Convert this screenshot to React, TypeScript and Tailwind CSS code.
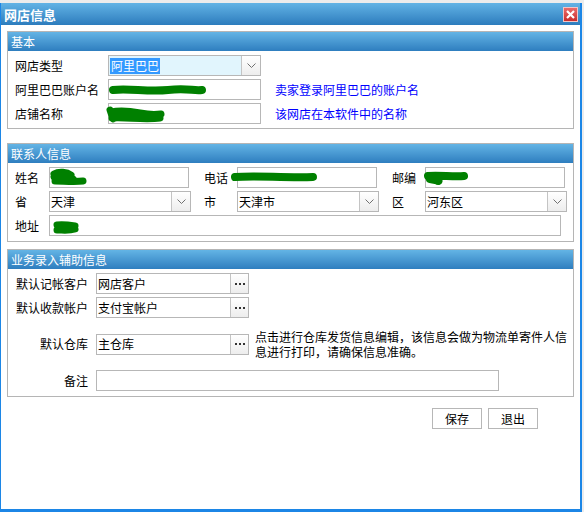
import type { ReactNode } from 'react';

const font = { fontFamily: '"Noto Sans CJK SC", "Noto Sans", sans-serif' };

function Section({ title, children, className = '' }: { title: string; children: ReactNode; className?: string }) {
  return (
    <div className={`ml-[6px] w-[567px] border border-[#b5b5b5] ${className}`}>
      <div className="flex h-[19px] items-center bg-gradient-to-b from-[#63b4e5] to-[#2e7ebf] pl-[3px] text-[12px] leading-none text-white">
        {title}
      </div>
      {children}
    </div>
  );
}

function Chevron() {
  return (
    <svg width="9" height="5" viewBox="0 0 9 5">
      <path d="M0.5 0.5 L4.5 4.5 L8.5 0.5" fill="none" stroke="#707070" strokeWidth="1" />
    </svg>
  );
}

function Field({
  width,
  children,
  select,
  dots,
  tint,
  scribble,
}: {
  width: number;
  children?: ReactNode;
  select?: boolean;
  dots?: boolean;
  tint?: boolean;
  scribble?: ReactNode;
}) {
  return (
    <div
      className={`relative flex h-[21px] shrink-0 border border-[#b7b7b7] ${tint ? 'bg-[#e1f5fd]' : 'bg-white'}`}
      style={{ width }}
    >
      <div className="flex min-w-0 flex-1 items-center pl-[1px] text-[12px] leading-none text-black">{children}</div>
      {select && (
        <div className="flex w-[19px] items-center justify-center border-l border-[#c4c4c4] bg-gradient-to-b from-white to-[#ededed]">
          <Chevron />
        </div>
      )}
      {dots && (
        <div className="flex w-[18px] items-center justify-center gap-[2px] border-l border-[#c4c4c4] bg-gradient-to-b from-white to-[#ededed]">
          <span className="h-[2px] w-[2px] bg-[#333]" />
          <span className="h-[2px] w-[2px] bg-[#333]" />
          <span className="h-[2px] w-[2px] bg-[#333]" />
        </div>
      )}
      {scribble}
    </div>
  );
}

// green marker strokes that hide personal data in the original screenshot
function Scribble({ left, top, w, h, d, sw = 7 }: { left: number; top: number; w: number; h: number; d: string; sw?: number }) {
  return (
    <svg className="pointer-events-none absolute" style={{ left, top }} width={w} height={h} viewBox={`0 0 ${w} ${h}`}>
      <path d={d} fill="none" stroke="#008000" strokeWidth={sw} strokeLinecap="round" strokeLinejoin="round" />
    </svg>
  );
}

export default function App() {
  return (
    <div className="h-[512px] w-[584px] overflow-hidden bg-[#ececec] pt-[3px]" style={font}>
      <div className="flex h-[509px] w-[582px] flex-col border-b-[3px] border-l border-r-2 border-[#1c86e6] bg-white">
        {/* title bar */}
        <div className="flex h-[22px] shrink-0 items-center justify-between bg-gradient-to-b from-[#62b3e5] to-[#2c7cbd] pl-[3px] pr-[2px]">
          <span className="text-[13px] font-bold leading-none text-white">网店信息</span>
          <div className="flex h-[15px] w-[15px] items-center justify-center border border-[#f4c4c4] bg-gradient-to-b from-[#ea6a6a] to-[#c92b2b]">
            <svg width="9" height="9" viewBox="0 0 9 9">
              <path d="M1 1 L8 8 M8 1 L1 8" stroke="white" strokeWidth="2.2" />
            </svg>
          </div>
        </div>

        <div className="pt-[6px]">
          {/* 基本 */}
          <Section title="基本">
            <div className="flex flex-col gap-[3px] pb-[4px] pl-[7px] pt-[4px] text-[12px]">
              <div className="flex items-center">
                <span className="w-[93px]">网店类型</span>
                <Field width={153} select tint>
                  <span className="bg-[#3399ff] px-[1px] py-[2px] text-white">阿里巴巴</span>
                </Field>
              </div>
              <div className="flex items-center">
                <span className="w-[93px]">阿里巴巴账户名</span>
                <Field
                  width={153}
                  scribble={<Scribble left={-1} top={3} w={100} h={14} d="M5 7 C20 5 40 9 60 7 S85 8 94 7" sw={8} />}
                />
                <span className="ml-[14px] text-[#0000ff]">卖家登录阿里巴巴的账户名</span>
              </div>
              <div className="flex items-center">
                <span className="w-[93px]">店铺名称</span>
                <Field
                  width={153}
                  scribble={
                    <Scribble
                      left={-4}
                      top={1}
                      w={62}
                      h={20}
                      d="M5 5 L8 14 M6 7 C15 5 25 6 35 8 S50 10 56 9 M7 13 C20 12 40 15 55 13 M10 10 L50 11"
                      sw={7}
                    />
                  }
                />
                <span className="ml-[14px] text-[#0000ff]">该网店在本软件中的名称</span>
              </div>
            </div>
          </Section>

          {/* 联系人信息 */}
          <Section title="联系人信息" className="mt-[14px]">
            <div className="grid grid-cols-[34px_142px_13px_33px_142px_13px_33px_142px] items-center gap-y-[3px] pb-[5px] pl-[7px] pt-[4px] text-[12px]">
              <span>姓名</span>
              <Field
                width={140}
                scribble={
                  <Scribble
                    left={-1}
                    top={0}
                    w={40}
                    h={19}
                    d="M5 6 C10 3 18 4 22 7 M5 9 C12 7 20 9 24 11 M6 13 C14 13 26 14 34 13 M6 10 L20 11"
                    sw={7}
                  />
                }
              />
              <span />
              <span>电话</span>
              <Field
                width={140}
                scribble={<Scribble left={-7} top={4} w={90} h={11} d="M4 5 C25 3 50 6 82 5" sw={8} />}
              />
              <span />
              <span>邮编</span>
              <Field
                width={140}
                scribble={<Scribble left={-2} top={3} w={46} h={15} d="M4 5 C15 4 30 6 40 5 M6 8 C12 9 16 10 14 10" sw={8} />}
              />

              <span>省</span>
              <Field width={142} select>
                天津
              </Field>
              <span />
              <span>市</span>
              <Field width={142} select>
                天津市
              </Field>
              <span />
              <span>区</span>
              <Field width={142} select>
                河东区
              </Field>

              <span>地址</span>
              <div className="col-span-7">
                <Field
                  width={512}
                  scribble={<Scribble left={1} top={3} w={30} h={16} d="M6 6 C12 5 18 6 24 7 M6 11 C12 11 18 12 24 10" sw={7} />}
                />
              </div>
            </div>
          </Section>

          {/* 业务录入辅助信息 */}
          <Section title="业务录入辅助信息" className="mt-[7px]">
            <div className="flex flex-col pb-[5px] pl-[7px] pt-[4px] text-[12px]">
              <div className="flex items-center">
                <span className="w-[81px] pr-[8px] text-right">默认记帐客户</span>
                <Field width={153} dots>
                  网店客户
                </Field>
              </div>
              <div className="mt-[3px] flex items-center">
                <span className="w-[81px] pr-[8px] text-right">默认收款帐户</span>
                <Field width={153} dots>
                  支付宝帐户
                </Field>
              </div>
              <div className="mt-[11px] flex items-center">
                <span className="w-[81px] pr-[8px] text-right">默认仓库</span>
                <Field width={153} dots>
                  主仓库
                </Field>
                <p className="ml-[6px] w-[314px] text-[12px] leading-[15px]">
                  点击进行仓库发货信息编辑，该信息会做为物流单寄件人信息进行打印，请确保信息准确。
                </p>
              </div>
              <div className="mt-[11px] flex items-center">
                <span className="w-[81px] pr-[8px] text-right">备注</span>
                <Field width={403} />
              </div>
            </div>
          </Section>

          <div className="mr-[42px] mt-[11px] flex justify-end gap-[6px]">
            <button className="h-[21px] w-[50px] border border-[#b7b7b7] bg-white text-[12px] leading-none text-black">
              保存
            </button>
            <button className="h-[21px] w-[50px] border border-[#b7b7b7] bg-white text-[12px] leading-none text-black">
              退出
            </button>
          </div>
        </div>
      </div>
    </div>
  );
}
